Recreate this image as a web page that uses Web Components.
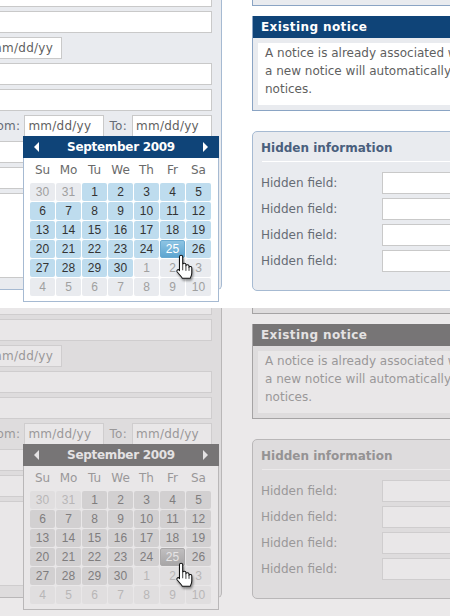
<!DOCTYPE html>
<html>
<head>
<meta charset="utf-8">
<title>Date picker states</title>
<style>
  html, body { margin: 0; background: #fff; }
  body { width: 450px; height: 616px; overflow: hidden; }
</style>
</head>
<body>
<form-screen></form-screen>
<form-screen muted></form-screen>

<script>
// shared font stack, real text everywhere
const SANS = '"DejaVu Sans", Verdana, sans-serif';

class TextField extends HTMLElement {
  connectedCallback() {
    this.attachShadow({ mode: 'open' });
    this.shadowRoot.innerHTML = `
      <style>
        :host {
          display: block;
          box-sizing: border-box;
          height: 22px;
          padding: 0 3px;
          background: var(--input-bg);
          border: 1px solid var(--input-border);
          color: var(--input-text);
          font: 12px/20px ${SANS};
          letter-spacing: .25px;
          white-space: nowrap;
        }
      </style>
      <slot></slot>
    `;
  }
}
customElements.define('text-field', TextField);

class EntryPanel extends HTMLElement {
  connectedCallback() {
    this.attachShadow({ mode: 'open' });
    this.shadowRoot.innerHTML = `
      <style>
        :host {
          display: flex;
          flex-direction: column;
          gap: 4px;
          box-sizing: border-box;
          flex: none;
          width: 262px;
          margin: -20px 0 0 -40px;
          padding: 5px 9px 11px 20px;
          background: var(--panel-bg);
          border: solid var(--panel-border);
          border-width: 0 1px 1px 0;
          border-bottom-right-radius: 5px;
        }
        .short { width: 82px; text-align: right; padding-right: 8px; }
        .dates {
          display: flex;
          justify-content: flex-end;
          align-items: center;
          color: var(--label);
          font: 12px/22px ${SANS};
          letter-spacing: .3px;
          white-space: nowrap;
        }
        .dates text-field { flex: none; width: 80px; }
        .from { margin-right: 4px; }
        .to { margin: 0 5px; }
        .area { height: 85px; }
      </style>
      <text-field></text-field>
      <text-field></text-field>
      <text-field class="short">mm/dd/yy</text-field>
      <text-field></text-field>
      <text-field></text-field>
      <div class="dates">
        <span class="from">From:</span>
        <text-field>mm/dd/yy</text-field>
        <span class="to">To:</span>
        <text-field>mm/dd/yy</text-field>
      </div>
      <text-field></text-field>
      <text-field></text-field>
      <text-field class="area"></text-field>
    `;
  }
}
customElements.define('entry-panel', EntryPanel);

class NoticeBox extends HTMLElement {
  connectedCallback() {
    this.attachShadow({ mode: 'open' });
    this.shadowRoot.innerHTML = `
      <style>
        :host {
          display: block;
          background: var(--panel-bg);
          border: solid var(--notice-border);
          border-width: 0 1px 1px;
        }
        h2 {
          margin: 0;
          height: 22px;
          padding-left: 8px;
          background: var(--head-bg);
          color: var(--head-text);
          font: bold 12px/22px ${SANS};
          letter-spacing: .4px;
        }
        .body { padding: 5px; }
        p {
          margin: 0;
          padding: 1px 7px 7px;
          background: var(--input-bg);
          color: var(--input-text);
          font: 12px/18px ${SANS};
          white-space: nowrap;
        }
      </style>
      <h2><slot name="title"></slot></h2>
      <div class="body"><p><slot></slot></p></div>
    `;
  }
}
customElements.define('notice-box', NoticeBox);

class HiddenInfo extends HTMLElement {
  connectedCallback() {
    this.attachShadow({ mode: 'open' });
    const rows = [1, 2, 3, 4].map(() => `
      <span>Hidden field:</span><text-field></text-field>`).join('');
    this.shadowRoot.innerHTML = `
      <style>
        :host {
          display: block;
          padding: 0 0 18px 8px;
          background: var(--panel-bg);
          border: 1px solid var(--panel-border);
          border-radius: 5px;
        }
        h3 {
          margin: 0 0 10px 1px;
          height: 29px;
          border-bottom: 1px solid var(--rule);
          color: var(--title);
          font: bold 12px/33px ${SANS};
          text-indent: -1px;
        }
        .rows {
          display: grid;
          grid-template-columns: 121px 1fr;
          gap: 4px 0;
          color: var(--label);
          font: 12px/22px ${SANS};
        }
      </style>
      <h3>Hidden information</h3>
      <div class="rows">${rows}</div>
    `;
  }
}
customElements.define('hidden-info', HiddenInfo);

class MonthCalendar extends HTMLElement {
  connectedCallback() {
    this.attachShadow({ mode: 'open' });
    const names = ['Su', 'Mo', 'Tu', 'We', 'Th', 'Fr', 'Sa'];
    const days = [
      [30, 1], [31, 1],
      ...Array.from({ length: 30 }, (_, i) => [i + 1, 0]),
      ...Array.from({ length: 10 }, (_, i) => [i + 1, 1]),
    ];
    const cells = days.map(([d, other]) => {
      let cls = other ? 'other' : '';
      if (!other && d === 25) cls = 'sel';
      return `<div class="${cls}">${d}</div>`;
    }).join('');
    this.shadowRoot.innerHTML = `
      <style>
        :host {
          position: absolute;
          left: 23px;
          top: 136px;
          box-sizing: border-box;
          width: 196px;
          height: 166px;
          background: var(--cal-bg);
          border: solid var(--panel-border);
          border-width: 0 1px 1px;
        }
        header {
          display: flex;
          align-items: center;
          justify-content: space-between;
          margin: 0 -1px;
          height: 22px;
          padding: 0 11px;
          background: var(--head-bg);
          color: var(--head-text);
          font: bold 12px/22px ${SANS};
          letter-spacing: -.3px;
        }
        svg { display: block; fill: var(--head-text); }
        .names, .days {
          display: grid;
          grid-template-columns: repeat(7, 25px);
          column-gap: 1px;
          margin-left: 6px;
          text-align: center;
        }
        .names {
          height: 25px;
          color: var(--week);
          font: 12px/24px ${SANS};
        }
        .days {
          grid-auto-rows: 18px;
          row-gap: 1px;
          color: var(--day-text);
          font: 12px/18px "Liberation Sans", Arial, sans-serif;
        }
        .days div { background: var(--day-bg); border-radius: 2px; }
        .days .other { background: var(--other-bg); color: var(--other-text); }
        .days .sel {
          box-sizing: border-box;
          background: linear-gradient(var(--sel-top), var(--sel-bottom));
          border: 1px solid var(--sel-border);
          color: var(--sel-text);
          line-height: 16px;
        }
      </style>
      <header>
        <svg width="5" height="10" viewBox="0 0 5 10"><path d="M0 5 5 0v10z"/></svg>
        <span>September 2009</span>
        <svg width="5" height="10" viewBox="0 0 5 10"><path d="M5 5 0 0v10z"/></svg>
      </header>
      <div class="names">${names.map(n => `<span>${n}</span>`).join('')}</div>
      <div class="days">${cells}</div>
    `;
  }
}
customElements.define('month-calendar', MonthCalendar);

class HandCursor extends HTMLElement {
  connectedCallback() {
    this.attachShadow({ mode: 'open' });
    this.shadowRoot.innerHTML = `
      <style>
        :host {
          position: absolute;
          left: 172px;
          top: 253px;
          width: 23px;
          height: 28px;
          filter: drop-shadow(1px 2px 1px rgba(0, 0, 0, .4));
        }
        svg { display: block; }
      </style>
      <svg width="23" height="28" viewBox="0 0 20 24.300">
        <path fill="#fff" stroke="#111" stroke-width=".9" stroke-linejoin="round"
          d="M6.500 3.200c0-1.600 2.800-1.600 2.800 0v6.600c.3-1.300 2.700-1.300 2.800.2v1c.3-1.200 2.600-1.100 2.700.3v1c.4-1 2.400-.8 2.400.6v4.500c0 2-.8 3.200-1.400 4.600H9c-1-1.900-2.800-3.500-4.500-5.500-.9-1.200.4-2.800 1.900-1.600l.1.500z"/>
        <path fill="none" stroke="#111" stroke-width=".7" d="M9.300 10v5M12.100 11v4.500M14.800 12v3.500"/>
      </svg>
    `;
  }
}
customElements.define('hand-cursor', HandCursor);

class FormScreen extends HTMLElement {
  connectedCallback() {
    this.attachShadow({ mode: 'open' });
    this.shadowRoot.innerHTML = `
      <style>
        :host {
          position: relative;
          display: flex;
          align-items: flex-start;
          height: 308px;
          overflow: hidden;
          background: #fff;
          --panel-bg: #e9ebef;
          --panel-border: #a6bad2;
          --notice-border: #8aa4c4;
          --input-bg: #fff;
          --input-border: #c9c9c9;
          --input-text: #5f5f5f;
          --label: #666c75;
          --week: #6a6a6a;
          --title: #4a5f7d;
          --rule: #fff;
          --head-bg: #0f4478;
          --head-text: #fff;
          --cal-bg: #fff;
          --day-bg: #bedcee;
          --day-text: #333;
          --other-bg: #e9ebef;
          --other-text: #a0a0a0;
          --sel-top: #8dc4e3;
          --sel-bottom: #5ea5d0;
          --sel-border: #69a9d0;
          --sel-text: #fff;
        }
        :host([muted]) {
          background: #ebe9ea;
          --panel-bg: #dedcdd;
          --panel-border: #b9b7b8;
          --notice-border: #a5a3a4;
          --input-bg: #e9e7e8;
          --input-border: #cfcdce;
          --input-text: #9a9899;
          --label: #9a9899;
          --week: #9a9899;
          --title: #959394;
          --rule: #ebe9ea;
          --head-bg: #777576;
          --head-text: #e4e2e3;
          --cal-bg: #e9e7e8;
          --day-bg: #d2d0d1;
          --day-text: #7f7d7e;
          --other-bg: #e0dedf;
          --other-text: #b8b6b7;
          --sel-top: #c0bebf;
          --sel-bottom: #a8a6a7;
          --sel-border: #aaa8a9;
          --sel-text: #e6e4e5;
        }
        .side {
          flex: none;
          display: flex;
          flex-direction: column;
          width: 260px;
          margin: -10px 0 0 30px;
        }
        .stub {
          box-sizing: border-box;
          height: 16px;
          margin-bottom: 10px;
          background: var(--panel-bg);
          border: solid var(--notice-border);
          border-width: 0 1px 1px;
        }
        notice-box { margin-bottom: 20px; }
      </style>
      <entry-panel></entry-panel>
      <div class="side">
        <div class="stub"></div>
        <notice-box>
          <span slot="title">Existing notice</span>
          A notice is already associated with<br>
          a new notice will automatically replace<br>
          notices.
        </notice-box>
        <hidden-info></hidden-info>
      </div>
      <month-calendar></month-calendar>
      <hand-cursor></hand-cursor>
    `;
  }
}
customElements.define('form-screen', FormScreen);
</script>
</body>
</html>
